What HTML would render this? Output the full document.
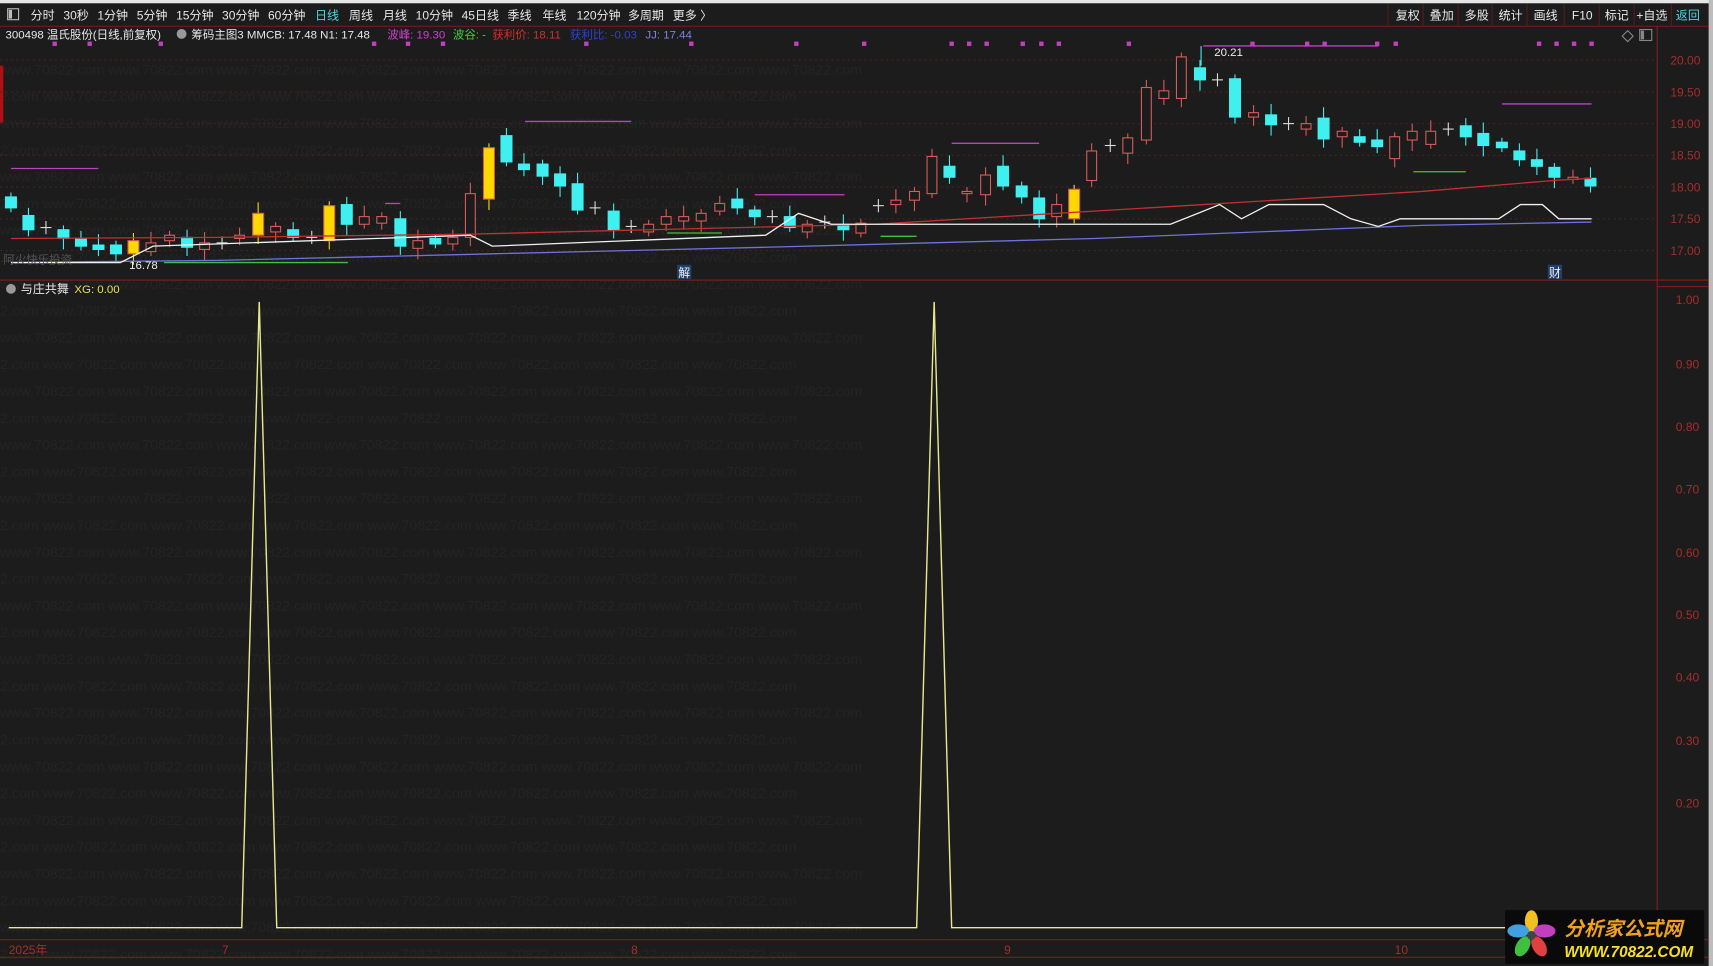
<!DOCTYPE html>
<html><head><meta charset="utf-8"><style>
html,body{margin:0;padding:0;background:#1c1c1c;overflow:hidden}
svg{display:block}
text{font-family:"Liberation Sans","Noto Sans CJK SC",sans-serif}
</style></head><body>
<svg id="s" width="1713" height="966" viewBox="0 0 1566 883" preserveAspectRatio="none" xmlns="http://www.w3.org/2000/svg">
<rect width="1566" height="883" fill="#1c1c1c"/>
<rect x="0" y="0" width="1566" height="3" fill="#e6e6e6"/>
<rect x="1562" y="0" width="4" height="883" fill="#bdbdbd"/>
<line x1="0" y1="24" x2="1562" y2="24" stroke="#7a1c1c"/>
<g id="wm" font-size="13" fill="#242424"></g>
<g font-size="11" fill="#e8e8e8">
<rect x="7" y="8" width="10" height="10" fill="none" stroke="#bbb"/><rect x="8" y="9" width="3" height="8" fill="#bbb"/>
<text x="28" y="18">分时</text><text x="58" y="18">30秒</text><text x="89" y="18">1分钟</text><text x="125" y="18">5分钟</text><text x="161" y="18">15分钟</text><text x="203" y="18">30分钟</text><text x="245" y="18">60分钟</text>
<text x="288" y="18" fill="#4fd6e0">日线</text><text x="319" y="18">周线</text><text x="350" y="18">月线</text><text x="380" y="18">10分钟</text><text x="422" y="18">45日线</text><text x="464" y="18">季线</text><text x="496" y="18">年线</text><text x="527" y="18">120分钟</text><text x="574" y="18">多周期</text><text x="615" y="18">更多 〉</text>
<text x="1276" y="18">复权</text><text x="1307" y="18">叠加</text><text x="1339" y="18">多股</text><text x="1370" y="18">统计</text><text x="1402" y="18">画线</text><text x="1437" y="18">F10</text><text x="1467" y="18">标记</text><text x="1496" y="18">+自选</text><text x="1532" y="18" fill="#4fd6e0">返回</text>
</g>
<g stroke="#5a1a1a"><line x1="1269" y1="4" x2="1269" y2="24"/><line x1="1301" y1="4" x2="1301" y2="24"/><line x1="1333" y1="4" x2="1333" y2="24"/><line x1="1364" y1="4" x2="1364" y2="24"/><line x1="1396" y1="4" x2="1396" y2="24"/><line x1="1430" y1="4" x2="1430" y2="24"/><line x1="1462" y1="4" x2="1462" y2="24"/><line x1="1494" y1="4" x2="1494" y2="24"/><line x1="1528" y1="4" x2="1528" y2="24"/></g>
<g font-size="10.5">
<text x="5" y="35" fill="#e8e8e8">300498 温氏股份(日线,前复权)</text>
<circle cx="166" cy="31" r="4.5" fill="#999"/>
<text x="175" y="35" fill="#e8e8e8">筹码主图3 MMCB: 17.48  N1: 17.48</text>
<text x="354" y="35" fill="#d040d0">波峰: 19.30</text>
<text x="414" y="35" fill="#40d040">波谷: -</text>
<text x="450" y="35" fill="#d03030">获利价: 18.11</text>
<text x="521" y="35" fill="#3040d0">获利比: -0.03</text>
<text x="590" y="35" fill="#8080e0">JJ: 17.44</text>
</g>
<rect x="0" y="60" width="3" height="52" fill="#b01010"/>
<line x1="1515" y1="24" x2="1515" y2="858" stroke="#8a1c1c"/>
<line x1="0" y1="256" x2="1562" y2="256" stroke="#8a1c1c"/>
<g stroke="#4a2020" stroke-dasharray="2,3">
<line x1="0" y1="55" x2="1515" y2="55"/><line x1="0" y1="84" x2="1515" y2="84"/><line x1="0" y1="113" x2="1515" y2="113"/><line x1="0" y1="142" x2="1515" y2="142"/><line x1="0" y1="171" x2="1515" y2="171"/><line x1="0" y1="200" x2="1515" y2="200"/><line x1="0" y1="229" x2="1515" y2="229"/>
</g>
<g font-size="11" fill="#a82c2c">
<text x="1527" y="59">20.00</text><text x="1527" y="88">19.50</text><text x="1527" y="117">19.00</text><text x="1527" y="146">18.50</text><text x="1527" y="175">18.00</text><text x="1527" y="204">17.50</text><text x="1527" y="233">17.00</text>
<text x="1532" y="278">1.00</text><text x="1532" y="337">0.90</text><text x="1532" y="394">0.80</text><text x="1532" y="451">0.70</text><text x="1532" y="509">0.60</text><text x="1532" y="566">0.50</text><text x="1532" y="623">0.40</text><text x="1532" y="681">0.30</text><text x="1532" y="738">0.20</text>
</g>
<g stroke="#8a1c1c" fill="none">
<line x1="1515" y1="262" x2="1562" y2="262"/>
<line x1="0" y1="859" x2="1562" y2="859"/><line x1="0" y1="875" x2="1562" y2="875"/>
</g>
<g font-size="11" fill="#a82c2c"><text x="8" y="872">2025年</text><text x="203" y="872">7</text><text x="577" y="872">8</text><text x="918" y="872">9</text><text x="1275" y="872">10</text></g>
<g id="c"></g>
<g fill="none" stroke-width="1.2">
<polyline stroke="#c03030" points="10,218 200,217 430,214 800,205 1100,187 1300,175 1420,165 1455,163"/>
<polyline stroke="#7070e0" points="10,240 200,238 450,232 700,226 1000,218 1200,210 1300,206 1455,203"/>
<polyline stroke="#f0f0f0" points="10,240 110,240 140,225 430,215 450,225 700,215 730,195 760,205 1070,205 1095,195 1115,187 1135,200 1160,187 1210,187 1235,200 1260,207 1280,200 1370,200 1390,187 1410,187 1425,200 1455,200"/>
<g stroke="#c040c0"><line x1="10" y1="154" x2="90" y2="154"/><line x1="352" y1="186" x2="366" y2="186"/><line x1="480" y1="111" x2="577" y2="111"/><line x1="690" y1="178" x2="772" y2="178"/><line x1="870" y1="131" x2="950" y2="131"/><line x1="1100" y1="42" x2="1260" y2="42"/><line x1="1373" y1="95" x2="1455" y2="95"/></g>
<g stroke="#40c040"><line x1="150" y1="240" x2="318" y2="240"/><line x1="610" y1="213" x2="660" y2="213"/><line x1="805" y1="216" x2="838" y2="216"/><line x1="1292" y1="157" x2="1340" y2="157"/></g>
</g>
<g fill="#c040c0" id="dots"></g>
<text x="1110" y="51" font-size="10.5" fill="#eee">20.21</text>
<text x="118" y="246" font-size="10.5" fill="#eee">16.78</text>
<text x="3" y="241" font-size="10.5" fill="#555">阿火快乐投资</text>
<rect x="619" y="242" width="13" height="13" fill="#1f3f6f"/><text x="620" y="253" font-size="11" fill="#eee">解</text>
<rect x="1415" y="242" width="13" height="13" fill="#1f3f6f"/><text x="1416" y="253" font-size="11" fill="#eee">财</text>
<circle cx="10" cy="264" r="4.5" fill="#999"/>
<text x="19" y="268" font-size="11" fill="#e8e8e8">与庄共舞</text>
<text x="68" y="268" font-size="10.5" fill="#e0e060">XG: 0.00</text>
<polyline fill="none" stroke="#e8e890" stroke-width="1.3" points="8,848 221,848 237,276 253,848 838,848 854,276 870,848 1376,848"/>
<rect x="1376" y="832" width="182" height="49" fill="#0a0a0a"/>
<g transform="translate(1400,855)">
<ellipse cx="0" cy="-13" rx="6" ry="10" fill="#f0c020"/>
<ellipse cx="12" cy="-4" rx="10" ry="6" fill="#c040c0"/>
<ellipse cx="7" cy="10" rx="6" ry="10" fill="#e04040" transform="rotate(-30 7 10)"/>
<ellipse cx="-8" cy="10" rx="6" ry="10" fill="#40c040" transform="rotate(30 -8 10)"/>
<ellipse cx="-12" cy="-4" rx="10" ry="6" fill="#40a0e0"/>
<circle r="4" fill="#444"/>
</g>
<text x="1430" y="855" font-size="18" font-weight="bold" fill="#f0a020" font-style="italic">分析家公式网</text>
<text x="1430" y="875" font-size="14" font-weight="bold" fill="#f8e020" font-style="italic">WWW.70822.COM</text>
<path d="M1488 28 l5 5 -5 5 -5 -5z" fill="none" stroke="#888"/>
<rect x="1499" y="27" width="11" height="10" fill="none" stroke="#888"/><rect x="1500" y="28" width="3" height="8" fill="#888"/>
</svg>
<script>
var NS="http://www.w3.org/2000/svg",g=document.getElementById("c");
function el(n,a,p){var e=document.createElementNS(NS,n);for(var k in a)e.setAttribute(k,a[k]);(p||g).appendChild(e);return e;}
var d=[[10,'c',180,190],[26,'c',197,210],[42,'s',208],[58,'c',210,218],[74,'c',218,225],[90,'c',224,228],[106,'c',224,232],[122,'y',220,232],[138,'r',222,230],[155,'r',215,220],[171,'c',217,226],[187,'r',222,228],[203,'s',222],[219,'r',215,218],[236,'y',195,215],[252,'r',207,212],[268,'c',210,217],[285,'s',217],[301,'y',188,220],[317,'c',187,205],[333,'r',198,205],[349,'r',198,204],[366,'c',200,225],[382,'r',220,227],[398,'c',218,223],[414,'r',217,223],[430,'r',177,217],[447,'y',135,182],[463,'c',124,148],[479,'c',150,155],[496,'c',150,161],[512,'c',159,170],[528,'c',168,192],[544,'s',190],[561,'c',193,210],[577,'s',207],[593,'r',205,212],[609,'r',198,205],[625,'r',198,202],[641,'r',195,202],[658,'r',186,193],[674,'c',182,190],[690,'c',192,198],[706,'s',198],[722,'c',198,208],[738,'r',205,212],[754,'s',203],[771,'c',206,210],[787,'r',204,213],[803,'s',188],[819,'r',183,187],[836,'r',175,183],[852,'r',143,177],[868,'c',152,162],[884,'r',175,177],[901,'r',160,178],[917,'c',152,170],[934,'c',170,180],[950,'c',181,200],[966,'r',187,198],[982,'y',173,200],[998,'r',138,165],[1015,'s',133],[1031,'r',126,140],[1048,'r',80,128],[1064,'r',83,90],[1080,'r',52,90],[1097,'c',62,73],[1113,'s',73],[1129,'c',72,107],[1146,'r',103,107],[1162,'c',105,114],[1178,'s',113],[1194,'r',113,118],[1210,'c',108,127],[1227,'r',120,125],[1243,'c',125,130],[1259,'c',128,134],[1275,'r',125,145],[1291,'r',120,128],[1308,'r',120,132],[1324,'s',118],[1340,'c',115,125],[1356,'c',122,133],[1373,'c',130,135],[1389,'c',138,146],[1405,'c',146,152],[1421,'c',153,162],[1438,'r',162,164],[1454,'c',163,170]];
d.forEach(function(c,i){var x=c[0],t=c[1];
 if(t=='s'){el('line',{x1:x,y1:c[2]-6,x2:x,y2:c[2]+6,stroke:'#ddd'});el('line',{x1:x-5,y1:c[2],x2:x+5,y2:c[2],stroke:'#ddd'});return;}
 var col=t=='c'?'#40f0f0':(t=='y'?'#ffd800':'#d85a5a');
 var hi=c[2]-4-(i%3)*3,lo=c[3]+4+(i%4)*2;
 el('line',{x1:x,y1:hi,x2:x,y2:lo,stroke:col});
 if(t=='r')el('rect',{x:x-4.5,y:c[2],width:9,height:Math.max(c[3]-c[2],1),fill:'#1c1c1c',stroke:col});
 else el('rect',{x:x-5,y:c[2],width:10,height:Math.max(c[3]-c[2],1),fill:col,stroke:t=='y'?'#d85a5a':col});
});
el('line',{x1:1098,y1:42,x2:1098,y2:60,stroke:'#40f0f0'});
var dp=document.getElementById("dots");
[50,82,147,342,373,405,536,632,728,790,870,886,902,935,952,968,1032,1145,1195,1211,1259,1276,1407,1423,1439,1455].forEach(function(x){el('rect',{x:x-2,y:38,width:4,height:4},dp);});
var wm=document.getElementById("wm");
for(var r=0;r<34;r++){el('text',{x:(r%2)*-60,y:68+r*24.5},wm).textContent="www.70822.com www.70822.com www.70822.com www.70822.com www.70822.com www.70822.com www.70822.com www.70822.com";}
</script>
</body></html>
